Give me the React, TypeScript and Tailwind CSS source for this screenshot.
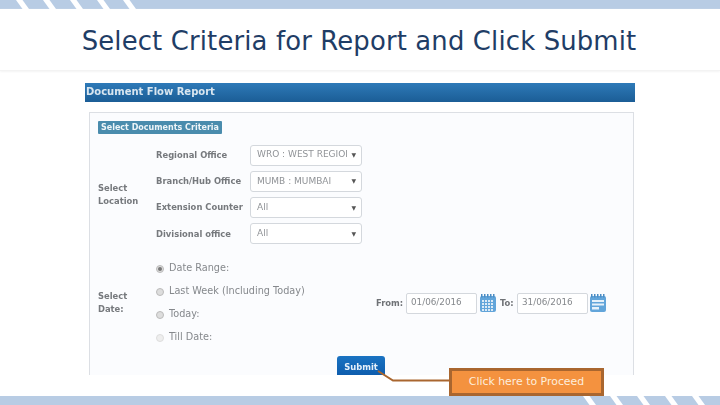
import React from "react";

function Stripes({ xs }: { xs: number[] }) {
  return (
    <svg width="720" height="9" viewBox="0 0 720 9" className="block">
      <rect width="720" height="9" fill="#b8cce4" />
      {xs.map((x) => (
        <polygon key={x} points={`${x},0 ${x + 6.5},0 ${x + 13},9 ${x + 6.5},9`} fill="#ffffff" />
      ))}
    </svg>
  );
}

function Select({ value }: { value: string }) {
  return (
    <div className="w-[112px] h-[21px] bg-white border border-[#d4d8dd] rounded-[3px] flex items-center pl-[6px] pr-[5px] text-[9px] text-[#909397]">
      <span className="w-[91px] mr-[4px] overflow-hidden whitespace-nowrap">{value}</span>
      <span className="text-[6px] leading-[8px] text-[#555]">▼</span>
    </div>
  );
}

function Row({ label, value }: { label: string; value: string }) {
  return (
    <div className="flex items-center h-[26.3px]">
      <span className="w-[94px] text-[8.4px] font-bold text-[#76797d] whitespace-nowrap">{label}</span>
      <Select value={value} />
    </div>
  );
}

function Radio({ label, checked, faint }: { label: string; checked?: boolean; faint?: boolean }) {
  return (
    <div className="flex items-center h-[23px] text-[9.7px] text-[#85888c] whitespace-nowrap">
      <span className={`w-[8px] h-[8px] rounded-full border mr-[5px] flex items-center justify-center ${faint ? "border-[#ddd] bg-[#eee]" : "border-[#bbb] bg-[#ddd]"}`}>
        {checked && <span className="w-[4px] h-[4px] rounded-full bg-[#777]" />}
      </span>
      {label}
    </div>
  );
}

function Calendar({ alt }: { alt?: boolean }) {
  return (
    <svg width="16" height="18" viewBox="0 0 16 18" className="shrink-0">
      <rect x="0" y="2" width="16" height="16" rx="2" fill="#62a5da" />
      {[2, 5, 8, 11, 14].map((x) => (
        <rect key={x} x={x - 1} y="0" width="1.5" height="3.5" fill="#4a8cc4" />
      ))}
      {alt ? (
        <>
          <rect x="2" y="6" width="12" height="2" fill="#e6f1fa" />
          <rect x="2" y="9.5" width="12" height="2" fill="#e6f1fa" />
          <rect x="2" y="13" width="7" height="2.5" fill="#e6f1fa" />
        </>
      ) : (
        <>
          {[2, 5, 8, 11].map((x) =>
            [6, 9, 12, 15].map((y) => <rect key={`${x}-${y}`} x={x} y={y} width="2" height="2" fill="#dbeaf6" />)
          )}
        </>
      )}
    </svg>
  );
}

function DateInput({ value }: { value: string }) {
  return (
    <div className="w-[71px] h-[21px] bg-white border border-[#d4d8dd] rounded-[2px] flex items-center pl-[4px] text-[8.8px] font-normal text-[#85888c]">
      {value}
    </div>
  );
}

export default function App() {
  return (
    <div className="relative w-[720px] h-[405px] overflow-hidden bg-white flex flex-col font-['DejaVu_Sans',sans-serif]">
      <Stripes xs={[16, 43, 70, 97, 123]} />
      <div className="h-[62px] shrink-0 flex items-start justify-center pt-[15px] pr-[2px] border-b border-[#f3f3f3] shadow-[0_1px_2px_#f4f4f4]">
        <h1 className="text-[25.9px] leading-[35px] text-[#1f3d66] tracking-[0.14px] whitespace-nowrap">
          Select Criteria for Report and Click Submit
        </h1>
      </div>
      <div className="flex-1 ml-[85px] w-[550px] mt-[12px] flex flex-col overflow-hidden blur-[0.3px]">
        <div className="h-[19px] shrink-0 bg-gradient-to-b from-[#2e7ab8] to-[#1b5d96] flex items-center pl-[1px] pb-[2px] text-[10px] font-bold text-[#d9e6f0] whitespace-nowrap">
          Document Flow Report
        </div>
        <div className="ml-[4px] w-[545px] mt-[10px] h-[263px] shrink-0 border-t border-x border-[#dcdfe4] bg-[#fbfcfe] pl-[8px] pt-[8px] overflow-hidden">
          <div className="w-fit h-[13px] bg-[#4a8cad] text-[#eef5f8] text-[8px] font-bold flex items-center px-[3px] rounded-[1px] whitespace-nowrap">
            Select Documents Criteria
          </div>
          <div className="flex items-center mt-[8px] h-[105px]">
            <div className="w-[58px] text-[8.4px] font-bold text-[#76797d] leading-[13px]">
              Select
              <br />
              Location
            </div>
            <div className="flex flex-col">
              <Row label="Regional Office" value="WRO : WEST REGION" />
              <Row label="Branch/Hub Office" value="MUMB : MUMBAI" />
              <Row label="Extension Counter" value="All" />
              <Row label="Divisional office" value="All" />
            </div>
          </div>
          <div className="flex items-center mt-[10px] h-[92px]">
            <div className="w-[58px] text-[8.4px] font-bold text-[#76797d] leading-[13px]">
              Select
              <br />
              Date:
            </div>
            <div className="w-[220px] flex flex-col">
              <Radio label="Date Range:" checked />
              <Radio label="Last Week (Including Today)" />
              <Radio label="Today:" />
              <Radio label="Till Date:" faint />
            </div>
            <div className="flex items-center text-[8.4px] font-bold text-[#6f7276]">
              <span className="w-[30px]">From:</span>
              <DateInput value="01/06/2016" />
              <span className="w-[3px]" />
              <Calendar />
              <span className="w-[17px] ml-[4px]">To:</span>
              <DateInput value="31/06/2016" />
              <span className="w-[2px]" />
              <Calendar alt />
            </div>
          </div>
          <div className="ml-[239px] mt-[7px] w-[48px] h-[24px] bg-gradient-to-b from-[#1a73c2] to-[#0b57a8] rounded-[3px] text-[#e6f0fa] text-[8.4px] font-bold flex items-start justify-center pt-[5px]">
            Submit
          </div>
        </div>
      </div>
      <div className="h-[21px] shrink-0" />
      <div className="absolute left-0 bottom-0">
        <Stripes xs={[583, 610, 637, 665, 692]} />
      </div>
      <svg width="80" height="20" viewBox="0 0 80 20" className="absolute left-[376px] top-[369px]">
        <polyline points="2,2 17,11.5 75,11.5" fill="none" stroke="#a9662f" strokeWidth="2" />
      </svg>
      <div className="absolute left-[449px] top-[368px] w-[155px] h-[28px] bg-[#f4923f] border-[3px] border-[#a9662f] flex items-center justify-center text-[10.9px] text-[#fdeedd] whitespace-nowrap">
        Click here to Proceed
      </div>
    </div>
  );
}
